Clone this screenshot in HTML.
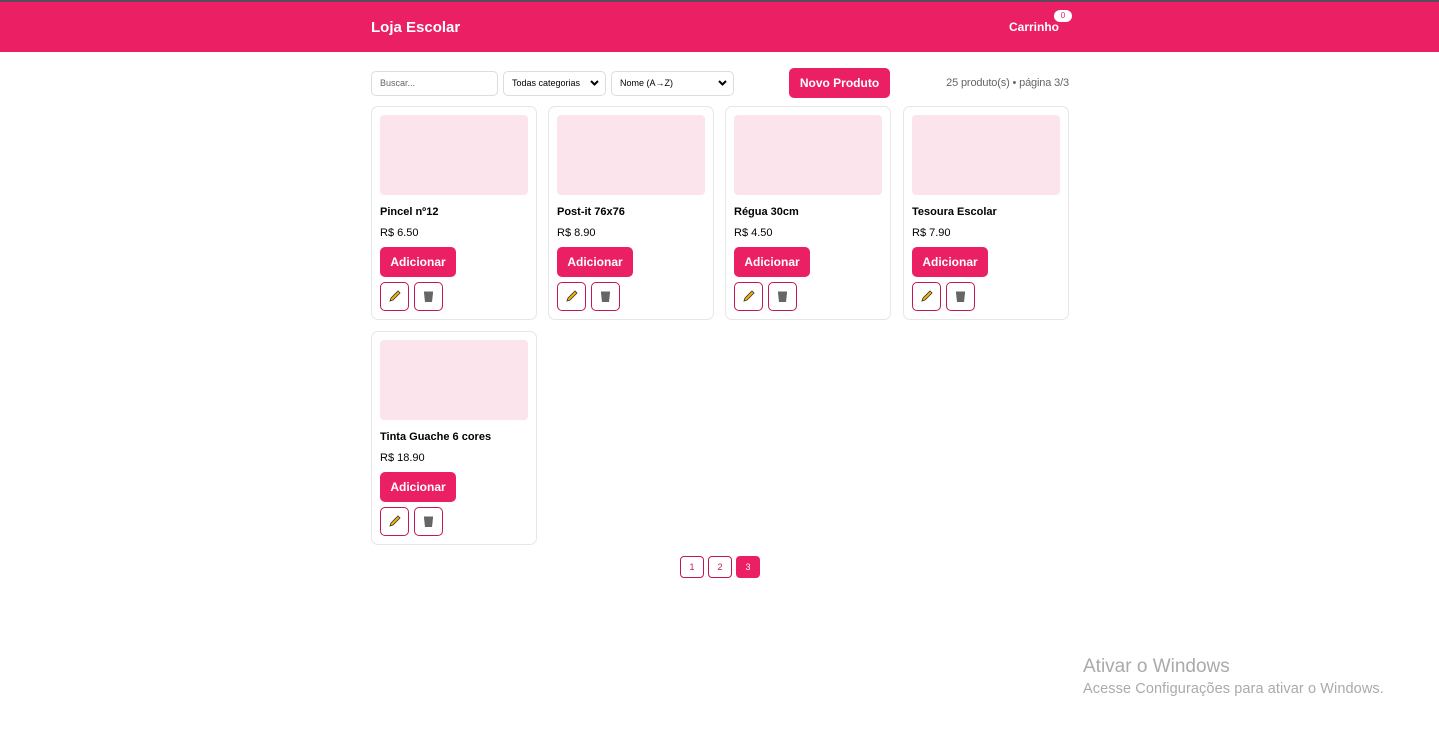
<!DOCTYPE html>
<html><head><meta charset="utf-8"><style>
*{box-sizing:border-box;margin:0;padding:0}
body{width:1439px;height:740px;background:#fff;font-family:"Liberation Sans",Arial,sans-serif;position:relative;overflow:hidden}
.top{height:2px;background:#5a4a5a}
header{height:50px;background:#ea1f64;position:relative;color:#fff}
.logo{position:absolute;left:371px;top:17px;font-size:15px;font-weight:bold}
.cart{position:absolute;left:1009px;top:18px;font-size:12px;font-weight:bold}
.badge{position:absolute;left:1054px;top:8px;width:18px;height:12px;background:#fff;color:#ea1f64;border-radius:7px;font-size:8px;text-align:center;line-height:12px}
.in{position:absolute;border:1px solid #ddd;border-radius:5px;height:25px;font-size:9px;color:#000;padding-left:8px;line-height:23px;background:#fff}
.chev{position:absolute;right:6px;top:5px}
.novo{position:absolute;left:789px;top:68px;width:101px;height:30px;background:#ea1f64;color:#fff;font-weight:bold;font-size:12px;border-radius:5px;text-align:center;line-height:30px}
.info{position:absolute;right:370px;top:77px;font-size:11px;color:#666;letter-spacing:-0.15px}
.card{position:absolute;width:166px;height:214px;border:1px solid #e6e6e6;border-radius:7px;background:#fff}
.img{position:absolute;left:8px;top:8px;width:148px;height:80px;background:#fce4ec;border-radius:4px}
.t{position:absolute;left:8px;top:99px;font-size:11px;font-weight:bold}
.p{position:absolute;left:8px;top:120px;font-size:11px}
.add{position:absolute;left:8px;top:140px;width:76px;height:30px;background:#ea1f64;color:#fff;font-weight:bold;font-size:12px;border-radius:5px;text-align:center;line-height:30px}
.ib{position:absolute;top:175px;width:29px;height:29px;border:1px solid #c2185b;border-radius:5px;background:#fff}
.pg{position:absolute;top:556px;width:24px;height:22px;border:1px solid #c2185b;border-radius:4px;font-size:9px;text-align:center;line-height:20px;color:#c2185b}
.win{position:absolute;left:1083px;color:#aaa}
</style></head><body>
<div class="top"></div>
<header><div class="logo">Loja Escolar</div><div class="cart">Carrinho</div><div class="badge">0</div></header>
<div class="in" style="left:371px;top:71px;width:127px;color:#666">Buscar...</div>
<div class="in" style="left:503px;top:71px;width:103px">Todas categorias<svg class="chev" width="9" height="12" viewBox="0 0 9 12"><path d="M1 4l3.5 3.5L8 4" stroke="#000" stroke-width="2" fill="none"/></svg></div>
<div class="in" style="left:611px;top:71px;width:123px">Nome (A→Z)<svg class="chev" width="9" height="12" viewBox="0 0 9 12"><path d="M1 4l3.5 3.5L8 4" stroke="#000" stroke-width="2" fill="none"/></svg></div>
<div class="novo">Novo Produto</div>
<div class="info">25 produto(s) • página 3/3</div>

<div class="card" style="left:371px;top:106px"><div class="img"></div><div class="t">Pincel nº12</div><div class="p">R$ 6.50</div><div class="add">Adicionar</div><div class="ib" style="left:8px"><svg width="27" height="27" viewBox="0 0 27 27"><path d="M9 18l1-3 7-7 2 2-7 7z" fill="#f5b400" stroke="#333" stroke-width=".8"/></svg></div><div class="ib" style="left:42px"><svg width="27" height="27" viewBox="0 0 27 27"><path d="M9 10h9l-1 9h-7z" fill="#666"/><rect x="9" y="8.5" width="9" height="1.5" fill="#666"/></svg></div></div>
<div class="card" style="left:548px;top:106px"><div class="img"></div><div class="t">Post-it 76x76</div><div class="p">R$ 8.90</div><div class="add">Adicionar</div><div class="ib" style="left:8px"><svg width="27" height="27" viewBox="0 0 27 27"><path d="M9 18l1-3 7-7 2 2-7 7z" fill="#f5b400" stroke="#333" stroke-width=".8"/></svg></div><div class="ib" style="left:42px"><svg width="27" height="27" viewBox="0 0 27 27"><path d="M9 10h9l-1 9h-7z" fill="#666"/><rect x="9" y="8.5" width="9" height="1.5" fill="#666"/></svg></div></div>
<div class="card" style="left:725px;top:106px"><div class="img"></div><div class="t">Régua 30cm</div><div class="p">R$ 4.50</div><div class="add">Adicionar</div><div class="ib" style="left:8px"><svg width="27" height="27" viewBox="0 0 27 27"><path d="M9 18l1-3 7-7 2 2-7 7z" fill="#f5b400" stroke="#333" stroke-width=".8"/></svg></div><div class="ib" style="left:42px"><svg width="27" height="27" viewBox="0 0 27 27"><path d="M9 10h9l-1 9h-7z" fill="#666"/><rect x="9" y="8.5" width="9" height="1.5" fill="#666"/></svg></div></div>
<div class="card" style="left:903px;top:106px"><div class="img"></div><div class="t">Tesoura Escolar</div><div class="p">R$ 7.90</div><div class="add">Adicionar</div><div class="ib" style="left:8px"><svg width="27" height="27" viewBox="0 0 27 27"><path d="M9 18l1-3 7-7 2 2-7 7z" fill="#f5b400" stroke="#333" stroke-width=".8"/></svg></div><div class="ib" style="left:42px"><svg width="27" height="27" viewBox="0 0 27 27"><path d="M9 10h9l-1 9h-7z" fill="#666"/><rect x="9" y="8.5" width="9" height="1.5" fill="#666"/></svg></div></div>
<div class="card" style="left:371px;top:331px"><div class="img"></div><div class="t">Tinta Guache 6 cores</div><div class="p">R$ 18.90</div><div class="add">Adicionar</div><div class="ib" style="left:8px"><svg width="27" height="27" viewBox="0 0 27 27"><path d="M9 18l1-3 7-7 2 2-7 7z" fill="#f5b400" stroke="#333" stroke-width=".8"/></svg></div><div class="ib" style="left:42px"><svg width="27" height="27" viewBox="0 0 27 27"><path d="M9 10h9l-1 9h-7z" fill="#666"/><rect x="9" y="8.5" width="9" height="1.5" fill="#666"/></svg></div></div>

<div class="pg" style="left:680px">1</div>
<div class="pg" style="left:708px">2</div>
<div class="pg" style="left:736px;background:#ea1f64;border-color:#ea1f64;color:#fff">3</div>

<div class="win" style="top:656px;font-size:19px">Ativar o Windows</div>
<div class="win" style="top:681px;font-size:14.5px;letter-spacing:0.1px">Acesse Configurações para ativar o Windows.</div>
</body></html>
